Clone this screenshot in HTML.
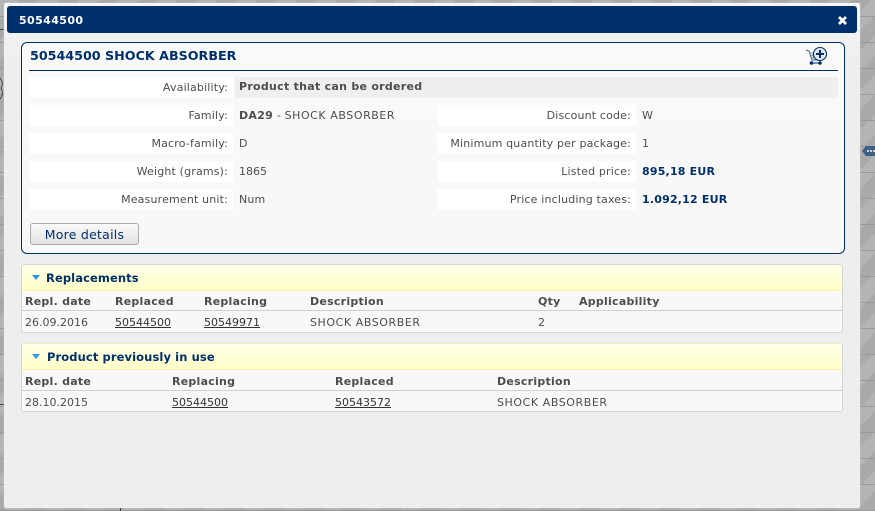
<!DOCTYPE html>
<html><head><meta charset="utf-8"><style>
html,body{margin:0;padding:0}
body{width:875px;height:511px;overflow:hidden;position:relative;background:#adadad;font-family:"DejaVu Sans","Liberation Sans",sans-serif;font-size:11px;color:#4d4d4d;letter-spacing:.17px}
.bg{position:absolute;left:0;top:0;width:875px;height:511px;background:repeating-linear-gradient(0deg,#999 0 1px,transparent 1px 26px),repeating-linear-gradient(135deg,#b4b4b4 0 14px,#a9a9a9 14px 28px)}
.a{position:absolute;white-space:nowrap}
.dlg{position:absolute;left:4px;top:3px;width:856px;height:505px;background:linear-gradient(#f6f6f6,#eee 60px,#eee);border-radius:2px;box-shadow:0 0 1px #ddd}
.hd{position:absolute;left:7px;top:6px;width:850px;height:27px;background:#00306b;border-radius:3px}
.panel{position:absolute;left:21px;top:42px;width:822px;height:210px;border:1px solid #00306b;border-radius:6px;background:linear-gradient(#f9f9f9,#f8f8f8)}
.l{position:absolute;background:#fff;height:21px;line-height:22px;text-align:right;box-sizing:border-box;padding-right:5px}
.v{position:absolute;height:21px;line-height:22px;white-space:nowrap}
.b{font-weight:bold;letter-spacing:.28px}
.n{color:#00306b;font-weight:bold;letter-spacing:.2px}
.box{position:absolute;left:21px;width:820px;border:1px solid #d4d4d4;border-radius:3px;background:#f8f8f8}
.yh{position:absolute;left:0;top:0;width:820px;background:linear-gradient(#fefee8,#ffffc8);border-bottom:1px solid #f2f2b0;box-sizing:border-box}
.yt{position:absolute;color:#00306b;font-weight:bold;font-size:11.5px;white-space:nowrap;letter-spacing:.1px}
.tri{position:absolute;width:0;height:0;border-left:4px solid transparent;border-right:4px solid transparent;border-top:5px solid #2e93f0}
.th{position:absolute;font-weight:bold;white-space:nowrap;letter-spacing:.25px}
.td{position:absolute;white-space:nowrap;letter-spacing:0}
.td u{color:#333}
.up,.td.up{letter-spacing:.57px}
.sep{position:absolute;left:0;width:820px;height:1px;background:#cfcfcf}
</style></head><body>
<div class="bg"></div>
<div class="a" style="left:0;top:29px;width:4px;height:1px;background:#444"></div>
<svg class="a" style="left:0;top:74px" width="4" height="28"><path d="M0 4 C3 8 3 11 1 14 C3 18 3 21 0 25" fill="none" stroke="#444" stroke-width="1"/></svg>
<div class="a" style="left:0;top:404px;width:4px;height:1px;background:#444"></div>
<div class="a" style="left:120px;top:508px;width:1px;height:3px;background:#333"></div>
<svg class="a" style="left:860px;top:143px" width="15" height="16"><path d="M2 8 L6 3 H15 V13 H6 Z" fill="#3e5f86"/><rect x="7" y="7" width="2" height="2" fill="#c5d0dc"/><rect x="10" y="7" width="2" height="2" fill="#c5d0dc"/><rect x="13" y="7" width="2" height="2" fill="#c5d0dc"/></svg>
<div class="dlg"></div>
<div class="hd"></div>
<div class="a" style="left:19px;top:14px;color:#fff;font-weight:bold;font-size:11px;line-height:14px;letter-spacing:.4px">50544500</div>
<svg class="a" style="left:837px;top:15px" width="11" height="11"><path d="M2 2 L9 9 M9 2 L2 9" stroke="#fff" stroke-width="2.8"/></svg>
<div class="panel"></div>
<div class="a" style="left:30px;top:48px;color:#00306b;font-weight:bold;font-size:12.7px;line-height:16px;letter-spacing:0">50544500 SHOCK ABSORBER</div>
<div class="a" style="left:29px;top:70px;width:809px;height:1px;background:#00306b"></div>
<svg class="a" style="left:805px;top:46px" width="24" height="20">
<path d="M1 4 L4 5 L7 14 H15" fill="none" stroke="#3e6088" stroke-width="1"/>
<path d="M4 7 H14 L13 12 H6 M6 9.5 H13 M8 7 V12 M10.5 7 V12" fill="none" stroke="#6e87a5" stroke-width=".8"/>
<path d="M6.5 17 H15" stroke="#00306b" stroke-width="1"/>
<circle cx="6.5" cy="17" r="1.8" fill="#00306b"/><circle cx="15" cy="17" r="1.8" fill="#00306b"/>
<circle cx="15" cy="8" r="6.5" fill="#e4e8ec" stroke="#00306b" stroke-width="1.1"/>
<path d="M11 8 H19 M15 4 V12" stroke="#00306b" stroke-width="2"/>
</svg>

<div class="l" style="left:29px;top:77px;width:204px">Availability:</div>
<div class="a" style="left:235px;top:77px;width:603px;height:21px;background:#efefef"></div>
<div class="v b" style="left:239px;top:76px">Product that can be ordered</div>

<div class="l" style="left:29px;top:105px;width:204px">Family:</div>
<div class="v" style="left:239px;top:105px"><span class="b">DA29</span> - <span class="up">SHOCK ABSORBER</span></div>
<div class="l" style="left:29px;top:133px;width:204px">Macro-family:</div>
<div class="v" style="left:239px;top:133px">D</div>
<div class="l" style="left:29px;top:161px;width:204px">Weight (grams):</div>
<div class="v" style="left:239px;top:161px;letter-spacing:0">1865</div>
<div class="l" style="left:29px;top:189px;width:204px">Measurement unit:</div>
<div class="v" style="left:239px;top:189px">Num</div>

<div class="l" style="left:437px;top:105px;width:199px">Discount code:</div>
<div class="v" style="left:642px;top:105px">W</div>
<div class="l" style="left:437px;top:133px;width:199px">Minimum quantity per package:</div>
<div class="v" style="left:642px;top:133px">1</div>
<div class="l" style="left:437px;top:161px;width:199px">Listed price:</div>
<div class="v n" style="left:642px;top:161px">895,18 EUR</div>
<div class="l" style="left:437px;top:189px;width:199px">Price including taxes:</div>
<div class="v n" style="left:642px;top:189px">1.092,12 EUR</div>

<div class="a" style="left:30px;top:223px;width:107px;height:20px;border:1px solid #aaa;border-radius:3px;background:linear-gradient(#fafafa,#e2e2e2);color:#00306b;font-size:12.5px;line-height:21px;text-align:center;letter-spacing:.25px">More details</div>

<div class="box" style="top:264px;height:67px">
<div class="yh" style="height:26px"></div>
<div class="tri" style="left:10px;top:10px"></div>
<div class="yt" style="left:24px;top:6px;line-height:15px">Replacements</div>
<div class="th" style="left:3px;top:30px">Repl. date</div>
<div class="th" style="left:93px;top:30px">Replaced</div>
<div class="th" style="left:182px;top:30px">Replacing</div>
<div class="th" style="left:288px;top:30px">Description</div>
<div class="th" style="left:516px;top:30px">Qty</div>
<div class="th" style="left:557px;top:30px">Applicability</div>
<div class="sep" style="top:45px"></div>
<div class="td" style="left:3px;top:51px">26.09.2016</div>
<div class="td" style="left:93px;top:51px"><u>50544500</u></div>
<div class="td" style="left:182px;top:51px"><u>50549971</u></div>
<div class="td up" style="left:288px;top:51px">SHOCK ABSORBER</div>
<div class="td" style="left:516px;top:51px">2</div>
</div>

<div class="box" style="top:343px;height:67px;border-top-color:#eeeeb8">
<div class="yh" style="height:26px"></div>
<div class="tri" style="left:10px;top:10px"></div>
<div class="yt" style="left:25px;top:6px;line-height:15px">Product previously in use</div>
<div class="th" style="left:3px;top:31px">Repl. date</div>
<div class="th" style="left:150px;top:31px">Replacing</div>
<div class="th" style="left:313px;top:31px">Replaced</div>
<div class="th" style="left:475px;top:31px">Description</div>
<div class="sep" style="top:46px"></div>
<div class="td" style="left:3px;top:52px">28.10.2015</div>
<div class="td" style="left:150px;top:52px"><u>50544500</u></div>
<div class="td" style="left:313px;top:52px"><u>50543572</u></div>
<div class="td up" style="left:475px;top:52px">SHOCK ABSORBER</div>
</div>
</body></html>
